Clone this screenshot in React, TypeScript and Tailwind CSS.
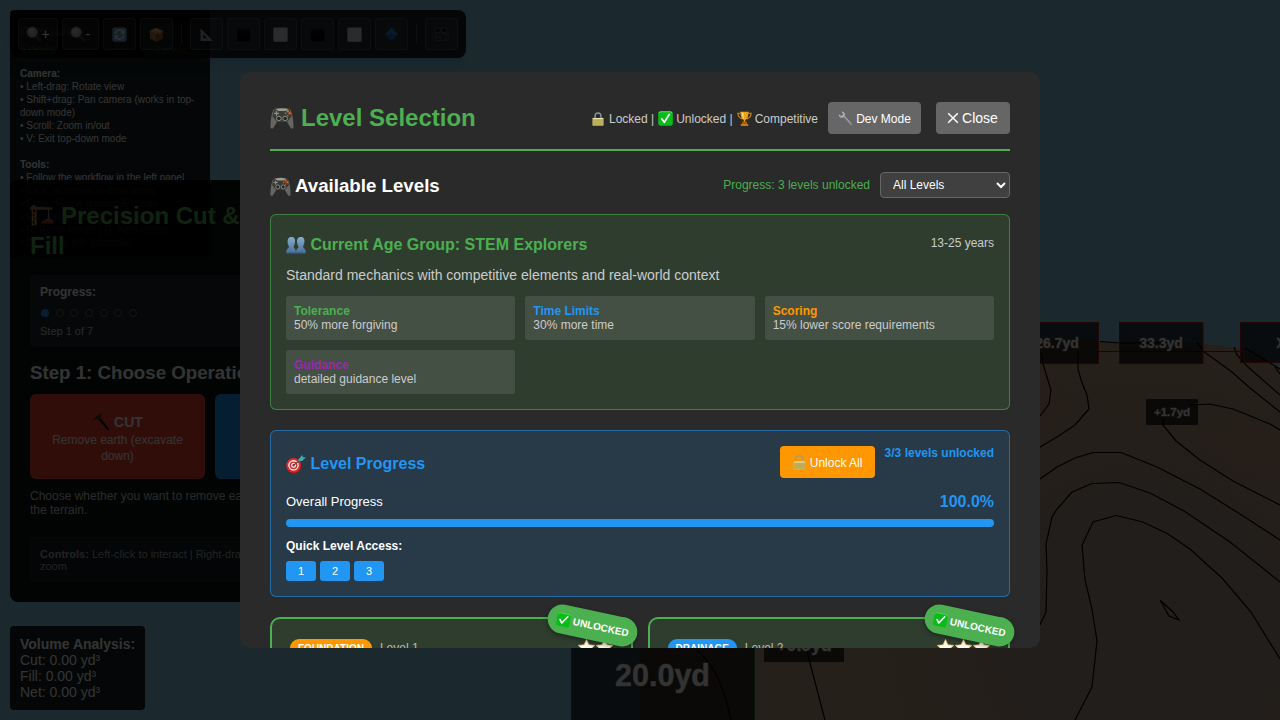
import React from 'react';

type IconProps = { size?: number; className?: string };

const Svg = ({ size = 16, className = '', children }: IconProps & { children: React.ReactNode }) => (
  <svg width={size} height={size} viewBox="0 0 20 20" className={`inline-block shrink-0 ${className}`}>
    {children}
  </svg>
);

const Gamepad = (p: IconProps) => (
  <Svg {...p}>
    <path d="M4 2.500C6 1.600 14 1.600 16 2.500 18 3.200 19.500 9 19.600 18.500L17.500 18.800 14 13H6L2.500 18.800.4 18.500C.5 9 2 3.200 4 2.500Z" fill="#666661" />
    <path d="M3.500 3.200C6 1.500 14 1.500 16.500 3.200L18 8.500 14 13.500H6L2 8.500Z" fill="#3a3a37" />
    <path d="M4.500 2.600C8 1.500 12 1.500 15.500 2.600L13 4.200H7Z" fill="#9a9a93" />
    <path d="M5.400 4.200v4M3.400 6.200h4" stroke="#8f918b" strokeWidth="1.100" />
    <circle cx="7.400" cy="10.400" r="1.900" fill="#252525" stroke="#a0a09a" strokeWidth=".7" />
    <circle cx="12.600" cy="10.400" r="1.900" fill="#252525" stroke="#a0a09a" strokeWidth=".7" />
    <circle cx="14.800" cy="4.300" r="1" fill="#e06a2c" />
    <circle cx="16.400" cy="6" r="1.100" fill="#f0521e" />
    <circle cx="13" cy="6" r=".8" fill="#b55a36" />
    <circle cx="14.800" cy="7.900" r=".8" fill="#84604c" />
  </Svg>
);

const Lock = (p: IconProps) => (
  <Svg {...p}>
    <path d="M5.800 10V6a4.200 4.500 0 0 1 8.400 0v4" fill="none" stroke="#8796a3" strokeWidth="2" />
    <rect x="2" y="8.500" width="16" height="11" rx="1" fill="#c5b765" />
    <path d="M2.500 9.200h15" stroke="#f0e7a6" strokeWidth="1.400" />
    <path d="M3 12h14M3 14.500h14M3 17h14" stroke="#a89a4d" strokeWidth=".7" />
  </Svg>
);

const OpenLock = (p: IconProps) => (
  <Svg {...p}>
    <path d="M4.800 7.500V5.500a4.900 4.500 0 0 1 9.800 0V10" fill="none" stroke="#a79b75" strokeWidth="1.900" />
    <rect x="2" y="8.500" width="15.500" height="11" rx="1" fill="#c9b55d" />
    <path d="M2.500 9.300h14.500" stroke="#eee0a0" strokeWidth="1.400" />
    <path d="M3 12h14M3 14.500h14M3 17h14" stroke="#a8964b" strokeWidth=".7" />
  </Svg>
);

const Check = (p: IconProps) => (
  <Svg {...p}>
    <rect x=".3" y=".3" width="19.400" height="19.400" rx="3" fill="#08bd18" />
    <path d="M1 3Q2 1 4 1h12q2 0 3 2" fill="none" stroke="#69e86e" strokeWidth="1" />
    <path d="M5 10.500 8.500 15 15 4.500" fill="none" stroke="#fff" strokeWidth="2.300" strokeLinecap="round" strokeLinejoin="round" />
  </Svg>
);

const Trophy = (p: IconProps) => (
  <Svg {...p}>
    <path d="M5 3H1.200C1.500 7 3 9.500 7 10.500M15 3h3.800C18.500 7 17 9.500 13 10.500" fill="none" stroke="#d98a0b" strokeWidth="1.500" />
    <path d="M4.500 1h11C15.300 7 14 11 11 12v3H9v-3C6 11 4.700 7 4.500 1Z" fill="#eaa31b" />
    <path d="M6.500 2h2c0 4 .4 7 1 9C7.500 9.500 6.500 6 6.500 2Z" fill="#ffe07a" />
    <path d="M7 14h6l1.500 5.500h-9Z" fill="#a65b0c" />
    <path d="M5 17.500h10v2H5Z" fill="#d2861a" />
  </Svg>
);

const Wrench = (p: IconProps) => (
  <Svg {...p}>
    <path d="M7.500 6.500 17.800 18" stroke="#7e858c" strokeWidth="2.800" strokeLinecap="round" />
    <path d="M1 4.200 4.500 6.500 7 4.200 4.500.8C8 .5 10 3.500 9.200 6L7 8.800C4 10 .5 7.500 1 4.200Z" fill="#a6adb3" />
    <path d="M8.500 7 17 16" stroke="#b4b9bd" strokeWidth=".8" />
  </Svg>
);

const People = (p: IconProps) => (
  <Svg {...p}>
    <defs>
      <linearGradient id="bust" x2="0" y2="1">
        <stop stopColor="#87aecb" />
        <stop offset="1" stopColor="#46719b" />
      </linearGradient>
    </defs>
    <path d="M5.300 2C8.500 2 9.300 4 9 7 8.800 9 8 10.500 7.700 11.500 7.700 13.500 10 13 10 18H.2c0-5 2.800-4.500 2.800-6.500C2.300 10.500 1.700 9 1.600 7 1.400 4 2.500 2 5.300 2Z" fill="url(#bust)" />
    <path d="M14.700 2C17.800 2 18.700 4 18.400 7 18.200 9 17.400 10.500 17.100 11.500c0 2 2.700 1.500 2.700 6.500H10c0-5 2.500-4.500 2.500-6.500C11.800 10.500 11.100 9 11 7 10.800 4 12 2 14.700 2Z" fill="url(#bust)" />
    <path d="M.2 17.800h19.600" stroke="#3d6089" strokeWidth="1.200" />
  </Svg>
);

const Target = (p: IconProps) => (
  <Svg {...p}>
    <ellipse cx="8" cy="12" rx="7.600" ry="7.800" fill="#941c1e" />
    <circle cx="7.500" cy="11.300" r="7.200" fill="#dc2b2e" />
    <circle cx="7.500" cy="11.300" r="5.300" fill="#f4eeea" />
    <circle cx="7.500" cy="11.300" r="3.900" fill="#d52c30" />
    <circle cx="7.500" cy="11.300" r="2.500" fill="#f5efed" />
    <circle cx="7.500" cy="11.300" r="1.200" fill="#cf2428" />
    <path d="m7.500 11.300 8.500-6.500" stroke="#314e54" strokeWidth="1.200" />
    <path d="m12 6 4.200-5 .7 2.200 3 .4-3.900 3.400-3 .4Z" fill="#45a9ab" />
  </Svg>
);

const Star = (p: IconProps) => (
  <Svg {...p}>
    <path d="m10 .5 2.800 6.300 6.900.7-5.200 4.600 1.500 6.800-6-3.500-6 3.500 1.500-6.800L.3 7.500l6.900-.7Z" fill="#fffbe8" stroke="#f2c374" strokeWidth=".8" />
  </Svg>
);

const Magnifier = (p: IconProps) => (
  <Svg {...p}>
    <path d="m12.500 12.500 5.500 5.500" stroke="#383838" strokeWidth="3.600" strokeLinecap="round" />
    <circle cx="8" cy="8" r="6.900" fill="#a9adb0" stroke="#5f6365" strokeWidth="1.200" />
    <circle cx="6.700" cy="6.500" r="3.800" fill="#bfc2c4" />
  </Svg>
);

const Refresh = (p: IconProps) => (
  <Svg {...p}>
    <rect x=".5" y=".5" width="19" height="19" rx="3.500" fill="#6f9fcd" />
    <path d="M4.300 9A5.900 5.900 0 0 1 14.500 5.800M15.700 11A5.900 5.900 0 0 1 5.500 14.200" fill="none" stroke="#e8f0f8" strokeWidth="2" />
    <path d="M16.500 3.500v5.500H11ZM3.500 16.500V11H9Z" fill="#e8f0f8" />
  </Svg>
);

const Box = (p: IconProps) => (
  <Svg {...p}>
    <path d="m1 5 9 3.500v11L1.600 15.800Z" fill="#b57d45" />
    <path d="M19 5 10 8.500v11l8.400-3.700Z" fill="#8f5b2d" />
    <path d="M1 5 10 1l9 4-9 3.900Z" fill="#d5a269" />
    <path d="m5 3.300 8.900 3.700v3.500l1.500-.7V6.300L7 2.400Z" fill="#e9c796" />
  </Svg>
);

const Ruler = (p: IconProps) => (
  <Svg {...p}>
    <path d="M2 1.500 18.500 18.500H2ZM5.500 9.500v5.500h5.300Z" fill="#9aa0b0" fillRule="evenodd" />
  </Svg>
);

const DarkSquare = (p: IconProps) => (
  <Svg {...p}>
    <defs>
      <linearGradient id="dark-sq" x2="0" y2="1">
        <stop stopColor="#1c1c1c" />
        <stop offset=".5" stopColor="#000" />
      </linearGradient>
    </defs>
    <rect x="1.500" y="1.500" width="17.500" height="17.500" rx="1" fill="url(#dark-sq)" />
  </Svg>
);

const LightSquare = (p: IconProps) => (
  <Svg {...p}>
    <rect x=".5" y=".5" width="19" height="19" rx="1.500" fill="#d6d6d6" />
  </Svg>
);

const Diamond = (p: IconProps) => (
  <Svg {...p}>
    <path d="m10 1 9 9-9 9-9-9Z" fill="#1164bb" />
    <path d="m10 1 9 9H1Z" fill="#287cc8" />
  </Svg>
);

const Camera = (p: IconProps) => (
  <Svg {...p}>
    <circle cx="5" cy="4.500" r="3.600" fill="#151515" stroke="#686868" strokeWidth="1.200" />
    <circle cx="13.500" cy="4.500" r="3.600" fill="#151515" stroke="#686868" strokeWidth="1.200" />
    <path d="M3 8.500h12V18H3Zm12 3 4-2.500v10l-4-3" fill="#232323" stroke="#606060" />
    <path d="M5.500 11h5v4.500h-5Z" fill="#444" />
  </Svg>
);

const Crane = (p: IconProps) => (
  <Svg {...p}>
    <path d="M2 5v14M5 5v14M2 7l3 3-3 3 3 3-3 3" stroke="#a8824a" strokeWidth="1.200" fill="none" />
    <path d="M.3 3.500 3.500 1 5 3.200 18.500 3.700v2H.3Z" fill="#9c773d" />
    <path d="M15.500 5.500v9" stroke="#898989" strokeWidth="1" />
    <path d="m11 15 4.500-2.500L20 15Z" fill="#6b6b6b" />
    <path d="M9.500 15h10v2.200h-10Z" fill="#aa3126" />
  </Svg>
);

const Pick = (p: IconProps) => (
  <Svg {...p}>
    <path d="M8 6 18 18" stroke="#080808" strokeWidth="2.600" strokeLinecap="round" />
    <path d="M.5 8.500C2.500 4.500 6.500 1 12.500.5 10.500 2 9.500 3 9.500 5.500L8 7C5.500 6.500 3 7 .5 8.500Z" fill="#453b38" />
  </Svg>
);

const Cross = () => (
  <svg width="12" height="12" viewBox="0 0 12 12" className="shrink-0">
    <path d="m1.200 1.200 9.600 9.600m0-9.600-9.600 9.600" stroke="#fff" strokeWidth="1.500" />
  </svg>
);

const Terrain = () => (
  <svg width="1280" height="720" viewBox="0 0 1280 720" className="block font-['Liberation_Sans',sans-serif] font-bold">
    <defs>
      <radialGradient id="ground" gradientUnits="userSpaceOnUse" cx="1140" cy="630" r="330">
        <stop stopColor="#ab9687" />
        <stop offset=".45" stopColor="#ac9785" />
        <stop offset=".65" stopColor="#b89c80" />
        <stop offset="1" stopColor="#bea084" />
      </radialGradient>
      <radialGradient id="clay">
        <stop stopColor="#c08c7a" stopOpacity=".5" />
        <stop offset="1" stopColor="#c08c7a" stopOpacity="0" />
      </radialGradient>
    </defs>
    <rect width="1280" height="720" fill="#87ceeb" />
    <path d="M640 720V560L800 339H1040L1100 341 1200 343 1243 349 1280 369V720Z" fill="url(#ground)" />
    <ellipse cx="1275" cy="450" rx="100" ry="40" fill="url(#clay)" />
    <ellipse cx="1040" cy="400" rx="30" ry="55" fill="url(#clay)" />
    <g fill="none" stroke="#000" strokeWidth="1.200">
      <path d="M1041 352 1043 364 1051 390 1049 404 1040 416" />
      <path d="M1078 350V369L1081 380 1087 395 1089 409 1075 425 1057 437 1040 447" />
      <path d="M1040 479 1057 467 1075 458 1093 452.500H1121L1157 467 1200 489 1240 514 1280 540" />
      <path d="M1040 625 1046 612 1047 570 1046 544 1052 517 1057 509 1072 492 1092 483.500 1119 482.500 1150 493 1184 511 1230 542 1280 582" />
      <path d="M1075 720 1092 687 1097 641 1092 609 1085 580 1082 545 1093 522 1116 515.500 1143 522 1168 534 1190 549 1222 578 1251 612 1280 659" />
      <path d="M1160 600 1169 616 1179 620 1173 612Z" />
      <path d="M1163 418V425L1176 441 1200 460 1233 481 1280 505M1190 405 1210 404 1233 409 1270 424 1280 430" />
      <path d="M1197 342 1203 351 1232 372 1250 388 1280 412M1234 347 1237 355 1248 367 1280 395M1245 348 1280 369M1275 367 1280 374" />
      <path d="M1100 341.500 1120 343H1160" />
      <path d="M697 650C715 666 724 688 731 720M806 648 825 720" />
    </g>
    <path d="M1099 351.500H1240" stroke="#a10f16" strokeWidth="1" />
    <g fill="#000" fillOpacity=".7">
      <rect x="1000" y="322.500" width="98.500" height="41" stroke="#a3201d" />
      <rect x="1119.500" y="322.500" width="83.500" height="41" stroke="#a3201d" />
      <rect x="1240.500" y="322.500" width="83" height="40" stroke="#a3201d" />
      <rect x="1146" y="399" width="52" height="26" />
      <rect x="764" y="622" width="80" height="40" />
      <rect x="571.500" y="600" width="183" height="140" stroke="#087c16" />
    </g>
    <g textAnchor="middle" fill="#fff" stroke="#888" strokeWidth=".8" paintOrder="stroke">
      <text x="1057" y="347.500" fontSize="14">26.7yd</text>
      <text x="1161" y="347.500" fontSize="14">33.3yd</text>
      <text x="1281" y="347.500" fontSize="14">X</text>
      <text x="1172" y="416" fontSize="11.500">+1.7yd</text>
      <text x="804" y="651" fontSize="17.700">+0.9yd</text>
      <text x="662.500" y="686" fontSize="30.500">20.0yd</text>
    </g>
  </svg>
);

const ToolButton = ({ children }: { children: React.ReactNode }) => (
  <button className="flex h-8 min-w-[33px] shrink-0 items-center justify-center rounded border border-white/15 bg-white/[0.08] px-[7px] text-[14px] leading-none text-white">
    {children}
  </button>
);

const Divider = () => <div className="mx-1 h-5 w-px shrink-0 bg-white/20" />;

const Toolbar = () => (
  <div className="absolute left-2.5 top-2.5 flex h-12 w-[456px] items-center gap-1 rounded-lg bg-black/85 p-2 shadow-lg">
    <ToolButton><span className="flex w-6 items-center"><Magnifier size={15.500} />+</span></ToolButton>
    <ToolButton><span className="flex w-[21px] items-center"><Magnifier size={15.500} />-</span></ToolButton>
    <ToolButton><Refresh size={15} /></ToolButton>
    <ToolButton><Box size={15} /></ToolButton>
    <Divider />
    <ToolButton><Ruler size={15} /></ToolButton>
    <ToolButton><DarkSquare size={15} /></ToolButton>
    <ToolButton><LightSquare size={15} /></ToolButton>
    <ToolButton><DarkSquare size={15} /></ToolButton>
    <ToolButton><LightSquare size={15} /></ToolButton>
    <ToolButton><Diamond size={15} /></ToolButton>
    <Divider />
    <ToolButton><Camera size={15} /></ToolButton>
  </div>
);

const HelpPanel = () => (
  <div className="absolute left-2.5 top-2.5 h-[249px] w-[200px] rounded bg-black/85 p-2.5 text-[10px] leading-[13px] text-white">
    <div className="mb-2 flex h-[39px] items-center justify-between">
      <b className="w-[100px] text-[14px] leading-[18px] text-[#4caf50]">Precision Tools</b>
      <span className="flex h-[34px] w-[57px] items-end justify-center rounded bg-[#4caf50]/30 text-[10px]">Labels</span>
    </div>
    <b>Camera:</b>
    <div>• Left-drag: Rotate view</div>
    <div>• Shift+drag: Pan camera (works in top-down mode)</div>
    <div>• Scroll: Zoom in/out</div>
    <div className="mb-[13px]">• V: Exit top-down mode</div>
    <b>Tools:</b>
    <div>• Follow the workflow in the left panel</div>
    <div>• Click on terrain to draw areas</div>
    <div>• Enter: Finish drawing/Execute</div>
    <div>• Escape: Cancel</div>
    <div>• R: Reset terrain | G: New terrain</div>
    <div>• D: Debug info (console)</div>
  </div>
);

const steps = [1, 2, 3, 4, 5, 6, 7];

const WorkflowPanel = () => (
  <div className="absolute left-2.5 top-[180px] h-[422px] w-[400px] rounded-lg bg-black/90 p-5 text-white">
    <h1 className="mb-[14px] h-[61px] pt-px text-[24px] font-bold leading-[30px] text-[#4caf50]">
      <Crane size={24} className="mr-[7px] align-[-3px]" />Precision Cut &amp;<br />Fill
    </h1>
    <div className="h-[72px] rounded bg-white/[0.08] p-2.5">
      <div className="text-[12px] font-bold leading-[14px]">Progress:</div>
      <div className="mt-[10px] flex gap-[6.700px] pl-px">
        {steps.map((n) => (
          <div key={n} className={n === 1 ? 'size-2 rounded-full bg-[#2196f3]' : 'size-2 rounded-full border border-[#666]'} />
        ))}
      </div>
      <div className="mt-2 text-[11px] leading-[13px] text-[#ccc]">Step 1 of 7</div>
    </div>
    <h2 className="mt-[15px] text-[18.700px] font-bold leading-[22px]">Step 1: Choose Operation</h2>
    <div className="mt-[10px] flex gap-2.5">
      <div className="flex h-[85px] w-[175px] flex-col items-center justify-center rounded-md bg-[#f44336] px-4 pt-0.5 text-center">
        <div className="flex items-center gap-1 text-[14px] font-bold leading-5"><Pick size={18} />CUT</div>
        <div className="w-[140px] text-[12px] leading-4">Remove earth (excavate down)</div>
      </div>
      <div className="flex h-[85px] w-[175px] flex-col items-center justify-center rounded-md bg-[#2196f3] text-center">
        <b className="text-[14px]">FILL</b>
        <div className="text-[12px]">Add earth (build up)</div>
      </div>
    </div>
    <p className="mt-[10px] text-[12px] leading-[14px] text-[#ccc]">Choose whether you want to remove earth from or add to<br />the terrain.</p>
    <div className="mt-5 h-[45px] rounded border border-white/5 bg-white/[0.03] px-[9px] py-[10px] text-[11px] leading-3 text-[#aaa]">
      <b>Controls:</b> Left-click to interact | Right-drag to rotate | Scroll to<br />zoom
    </div>
  </div>
);

const VolumePanel = () => (
  <div className="absolute left-2.5 top-[626px] h-[84px] w-[135px] whitespace-nowrap rounded bg-black/85 p-2.5 text-[14px] leading-4 text-white">
    <b>Volume Analysis:</b>
    <div>Cut: 0.00 yd³</div>
    <div>Fill: 0.00 yd³</div>
    <div>Net: 0.00 yd³</div>
  </div>
);

const traits = [
  { name: 'Tolerance', text: '50% more forgiving', color: 'text-[#4caf50]' },
  { name: 'Time Limits', text: '30% more time', color: 'text-[#2196f3]' },
  { name: 'Scoring', text: '15% lower score requirements', color: 'text-[#ff9800]' },
  { name: 'Guidance', text: 'detailed guidance level', color: 'text-[#9c27b0]' },
];

const AgeGroupCard = () => (
  <section className="h-[196px] rounded-md border border-[#4caf50]/60 bg-[#4caf50]/[0.14] px-[15px] pt-[15px]">
    <div className="flex justify-between">
      <h3 className="mt-[6px] flex h-[18px] items-center gap-[4.500px] text-[16px] font-bold text-[#4caf50]"><People size={20} />Current Age Group: STEM Explorers</h3>
      <span className="mt-[6px] text-[12px] leading-[14px] text-[#ccc]">13-25 years</span>
    </div>
    <p className="mt-[13px] text-[14px] leading-4 text-[#ccc]">Standard mechanics with competitive elements and real-world context</p>
    <div className="mt-[13px] grid grid-cols-3 gap-2.5">
      {traits.map((t) => (
        <div key={t.name} className="h-11 rounded-[3px] bg-white/10 p-2 text-[12px] leading-[14px] text-[#ccc]">
          <div className={`font-bold ${t.color}`}>{t.name}</div>
          <div>{t.text}</div>
        </div>
      ))}
    </div>
  </section>
);

const ProgressCard = () => (
  <section className="mt-5 h-[167px] rounded-md border border-[#2196f3]/55 bg-[#2196f3]/15 p-[15px]">
    <div className="flex h-8 justify-between">
      <h3 className="mt-[2px] flex h-8 items-center gap-[4.500px] text-[16px] font-bold text-[#2196f3]"><Target size={20} />Level Progress</h3>
      <div className="flex gap-2.5">
        <button className="flex h-8 w-[95px] items-center justify-center gap-[3px] rounded bg-[#ff9800] pt-px text-[12px] text-white"><OpenLock size={15} />Unlock All</button>
        <span className="text-[12px] font-bold leading-[14px] text-[#2196f3]">3/3 levels unlocked</span>
      </div>
    </div>
    <div className="mt-[14px] flex h-[19px] items-center justify-between">
      <span className="text-[13px] text-white">Overall Progress</span>
      <span className="text-[16px] font-bold text-[#2196f3]">100.0%</span>
    </div>
    <div className="mt-2 h-2 rounded bg-[#2196f3]" />
    <div className="mt-3 text-[12px] font-bold leading-[14px] text-white">Quick Level Access:</div>
    <div className="mt-2 flex gap-1">
      {[1, 2, 3].map((n) => (
        <button key={n} className="h-5 w-[30px] rounded-[3px] bg-[#2196f3] text-[11px] leading-5 text-white">{n}</button>
      ))}
    </div>
  </section>
);

const LevelCard = ({ tag, tagClass, level, stars }: { tag: string; tagClass: string; level: string; stars: number }) => (
  <article className="relative h-[200px] rounded-[10px] border-2 border-[#4caf50] bg-[#4caf50]/[0.14] px-[18px] pt-5">
    <div className="flex items-start justify-between">
      <div className="flex items-center gap-2">
        <span className={`flex h-[18px] items-center rounded-full px-2 text-[10px] font-bold text-white ${tagClass}`}>{tag}</span>
        <span className="text-[12px] text-[#bbb]">{level}</span>
      </div>
      <div className="flex gap-px">
        {Array.from({ length: stars }, (_, i) => <Star key={i} size={17} />)}
      </div>
    </div>
    <div className="absolute -right-[7px] -top-[8px] flex h-[29px] w-[91px] rotate-12 items-center justify-center gap-[3px] rounded-full bg-[#4caf50] text-[10px] font-bold text-white shadow-[0_2px_5px_rgba(0,0,0,0.35)]">
      <Check size={14} />UNLOCKED
    </div>
  </article>
);

const Modal = () => (
  <div className="absolute inset-0 flex items-center justify-center bg-black/80">
    <div className="h-[576px] w-[800px] overflow-hidden rounded-[10px] bg-[#2a2a2a] p-[30px]">
      <header className="flex h-[49px] items-start justify-between border-b-2 border-[#4caf50]">
        <h2 className="flex h-8 items-center gap-[7px] text-[24px] font-bold text-[#4caf50]"><Gamepad size={24} />Level Selection</h2>
        <div className="flex h-8 items-center">
          <div className="flex items-center pt-px text-[12px] text-[#ccc]">
            <Lock size={14} className="mr-1" />Locked |<Check size={15} className="ml-1 mr-[3px]" />Unlocked |<Trophy size={15} className="ml-1 mr-[3px]" />Competitive
          </div>
          <button className="ml-2.5 flex h-8 w-[93px] items-center justify-center gap-[3px] rounded bg-[#666] pt-px text-[12px] text-white"><Wrench size={15} />Dev Mode</button>
          <button className="ml-[15px] flex h-8 w-[74px] items-center justify-center gap-[3px] rounded bg-[#666] pr-px text-[14px] text-white"><Cross />Close</button>
        </div>
      </header>
      <div className="mb-4 mt-[21px] flex h-[26px] items-center justify-between">
        <h3 className="flex items-center gap-[4px] pt-0.5 text-[18.700px] font-bold text-white"><Gamepad size={21} />Available Levels</h3>
        <div className="flex items-center gap-2.5">
          <span className="text-[12px] text-[#4caf50]">Progress: 3 levels unlocked</span>
          <select className="h-[26px] w-[130px] rounded border border-[#666] bg-[#404040] px-2 text-[12px] text-white">
            <option>All Levels</option>
          </select>
        </div>
      </div>
      <AgeGroupCard />
      <ProgressCard />
      <div className="mt-5 grid grid-cols-2 gap-[15px]">
        <LevelCard tag="FOUNDATION" tagClass="bg-[#ff9800]" level="Level 1" stars={2} />
        <LevelCard tag="DRAINAGE" tagClass="bg-[#2196f3]" level="Level 2" stars={3} />
      </div>
    </div>
  </div>
);

export default function App() {
  return (
    <div className="relative h-[720px] w-[1280px] overflow-hidden bg-[#87ceeb] font-['Liberation_Sans',Arial,sans-serif]">
      <Terrain />
      <HelpPanel />
      <WorkflowPanel />
      <Toolbar />
      <VolumePanel />
      <Modal />
    </div>
  );
}
